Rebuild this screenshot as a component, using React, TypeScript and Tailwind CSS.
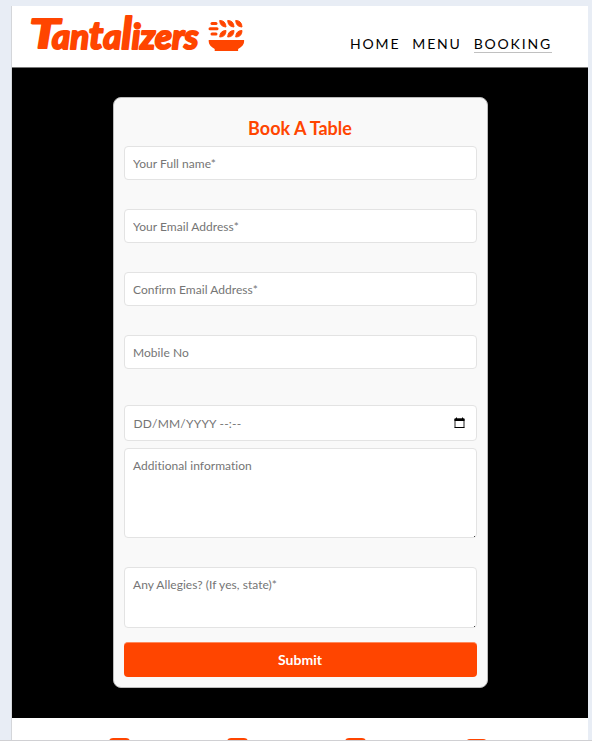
import React from "react";

const field =
  "block w-full rounded border border-[#e3e3e3] bg-white px-[8.5px] text-[12px] tracking-[0.04px] text-[#333] placeholder:text-[#757575] placeholder:opacity-100 outline-none";

function Logo() {
  return (
    <svg className="ml-4 h-[60px] w-[222px] shrink-0" viewBox="28 6 222 60" fill="#ff4500" role="img" aria-label="Tantalizers">
      <g fontFamily="Lato, 'Liberation Sans', sans-serif" fontWeight="700" fontStyle="italic" stroke="#ff4500" strokeWidth="2.2" strokeLinejoin="round" strokeLinecap="round">
        <text x="29.500" y="48" fontSize="40" textLength="30" lengthAdjust="spacingAndGlyphs">T</text>
        <text x="52" y="48.500" fontSize="35" textLength="146.500" lengthAdjust="spacingAndGlyphs">
          an<tspan fontSize="39">t</tspan>a<tspan fontSize="43">l</tspan>izers
        </text>
      </g>
      <path d="M208.700 40h35.400v1.500q0 4-6 7.500v2h-23.400v-2q-6-3.500-6-7.500z" />
      <rect x="210.500" y="22" width="7" height="3" rx="1.500" />
      <rect x="208.500" y="27.200" width="10" height="3" rx="1.500" />
      <rect x="210.500" y="32.600" width="7" height="3" rx="1.500" />
      <path d="M219.700 20.500q6 0 6.300 6.500-6-.3-6.300-6.500zM227.700 20.500q6 0 6.300 6.500-6-.3-6.300-6.500zM235.700 20.500q6 0 6.300 6.500-6-.3-6.300-6.500z" stroke="#ff4500" strokeLinejoin="round" />
      <path d="M219.700 37q.3-6.500 6.300-6.500 0 6.500-6.300 6.500zM227.700 37q.3-6.500 6.300-6.500 0 6.500-6.300 6.500zM235.700 37q.3-6.500 6.300-6.500 0 6.500-6.300 6.500z" stroke="#ff4500" strokeLinejoin="round" />
    </svg>
  );
}

export default function App() {
  return (
    <div className="flex h-[741px] w-[592px] flex-col overflow-hidden border-b border-[#d0d0d3] bg-[#e8edf5] pt-1.5 pr-1 pl-[11px] font-['Lato','Liberation_Sans',sans-serif] [font-variant-ligatures:none]">
      <div className="flex min-h-0 flex-1 flex-col border-l border-[#d4d6da] bg-white">
        <header className="flex h-[62px] shrink-0 justify-between border-b border-[#777] bg-white">
          <Logo />
          <nav className="mt-[30px] mr-9 flex items-start gap-3 text-[14px] leading-4 tracking-[1.82px] text-black">
            <a>HOME</a>
            <a>MENU</a>
            <a className="border-b border-[#c0c0c0]">BOOKING</a>
          </nav>
        </header>

        <main className="flex h-[650px] shrink-0 justify-center bg-black pt-[29px]">
          <form className="h-[591px] w-[375px] rounded-lg border border-[#bbb] bg-[#f9f9f9] px-[10px] pt-[18px]">
            <h1 className="h-[30px] text-center text-[18px] leading-6 font-bold text-[#ff4500]">Book A Table</h1>
            <div className="flex flex-col gap-[29px]">
              <input className={`${field} h-[34px]`} placeholder="Your Full name*" />
              <input className={`${field} h-[34px]`} placeholder="Your Email Address*" />
              <input className={`${field} h-[34px]`} placeholder="Confirm Email Address*" />
              <input className={`${field} h-[34px]`} placeholder="Mobile No" />
            </div>
            <div className="mt-9 flex h-9 items-center justify-between rounded border border-[#e3e3e3] bg-white pr-[11px] pl-[9px] text-[12px] text-[#757575]">
              <span className="mt-px tracking-[0.2px]">DD/MM/YYYY --:--</span>
              <svg className="h-3 w-[11px]" viewBox="0 0 11 12" aria-label="Choose date">
                <path d="M1 2h9v8.500H1z" fill="none" stroke="#222" />
                <path d="M.5 1.500h10V4H.5zM2 .5h1v2H2zM8 .5h1v2H8zM.5 10h10v1H.5z" fill="#000" />
              </svg>
            </div>
            <div className="relative mt-[7px]">
              <textarea className={`${field} h-[90px] resize-none py-[9px] leading-4`} placeholder="Additional information" />
              <i className="absolute right-[2px] bottom-[1px] h-px w-px bg-[#444]" />
            </div>
            <div className="relative mt-[29px]">
              <textarea className={`${field} h-[61px] resize-none py-[9px] leading-4`} placeholder="Any Allegies? (If yes, state)*" />
              <i className="absolute right-[2px] bottom-[1px] h-px w-px bg-[#444]" />
            </div>
            <button type="button" className="mt-[14px] h-[35px] w-full rounded border-t border-[#ff8a5c] bg-[#ff4500] pb-px text-[14px] font-bold text-white">
              Submit
            </button>
          </form>
        </main>

        <footer className="min-h-0 flex-1 overflow-hidden bg-white">
          <div className="flex pt-[19.500px] pl-[97px]">
            <div className="h-5 w-[21px] rounded-sm bg-[#ff4500]" />
            <div className="ml-[97px] h-5 w-[21px] rounded-sm bg-[#ff4500]" />
            <div className="ml-[97px] h-5 w-[21px] rounded-sm bg-[#ff4500]" />
            <div className="mt-[1.500px] ml-[100px] h-5 w-[21px] rounded-sm bg-[#ff4500]" />
          </div>
        </footer>
      </div>
    </div>
  );
}
